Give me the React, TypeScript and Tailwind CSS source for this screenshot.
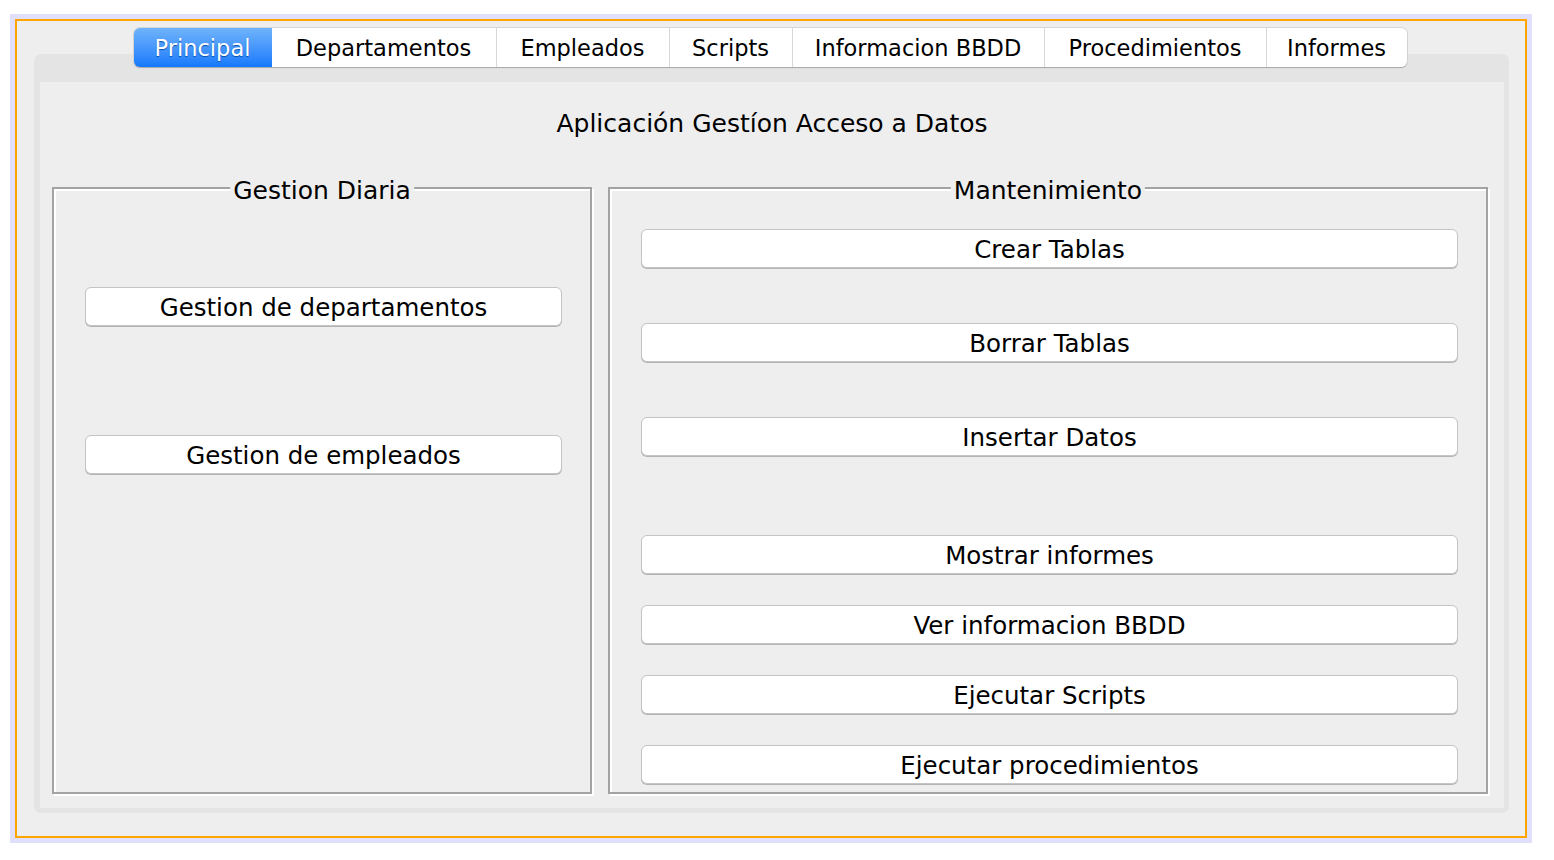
const tabs = [
  { label: "Principal", w: "w-[138px]", active: true },
  { label: "Departamentos", w: "w-[225px]" },
  { label: "Empleados", w: "w-[173px]" },
  { label: "Scripts", w: "w-[123px]" },
  { label: "Informacion BBDD", w: "w-[252px]" },
  { label: "Procedimientos", w: "w-[222px]" },
  { label: "Informes", w: "w-[140px]" },
];

function Boton({ label, className = "" }: { label: string; className?: string }) {
  return (
    <button
      className={
        "h-[39px] w-full rounded-[6px] border border-[#c4c4c4] bg-white pt-[3px] text-[24.5px] leading-[30px] text-black shadow-[0_1px_0_#b4b4b4] " +
        className
      }
    >
      {label}
    </button>
  );
}

function Grupo({
  title,
  className = "",
  children,
}: {
  title: string;
  className?: string;
  children: React.ReactNode;
}) {
  return (
    <div
      className={
        "relative border-2 border-[#a3a3a3] shadow-[inset_2px_2px_0_#ffffff,2px_2px_0_#ffffff] " +
        className
      }
    >
      <span className="absolute left-1/2 top-[-13px] -translate-x-1/2 bg-[#eeeeee] px-[3px] text-[25px] leading-[30px] text-black whitespace-nowrap">
        {title}
      </span>
      {children}
    </div>
  );
}

export default function App() {
  return (
    <div
      className="h-[860px] w-[1554px] bg-white pl-[10px] pt-[14px]"
      style={{ fontFamily: '"DejaVu Sans", "Liberation Sans", sans-serif' }}
    >
      <div className="h-[829px] w-[1522px] bg-[#e0e0fc] p-[5px]">
        <div className="h-full w-full border-2 border-[#ffa500] bg-[#eeeeee] pl-[17px] pr-[16px] pt-[7px]">
          {/* tabs */}
          <div className="relative z-10 flex h-[39px] justify-center pr-[3px]">
            <div className="flex rounded-[6px] shadow-[0_1px_1px_#a8a8a8,0_0_0_1px_#d6d6d6]">
              {tabs.map((t, i) => (
                <div
                  key={t.label}
                  className={
                    t.active
                      ? `${t.w} flex items-center justify-center rounded-l-[6px] bg-gradient-to-b from-[#6fb3fb] to-[#1379fb] pt-[3px] text-[22.5px] text-white [text-shadow:0_1px_1px_#0b4ea8]`
                      : `${t.w} flex items-center justify-center bg-white pt-[3px] text-[22.5px] text-black ${
                          i < tabs.length - 1 ? "border-r border-[#d8d8d8]" : "rounded-r-[6px]"
                        }`
                  }
                >
                  {t.label}
                </div>
              ))}
            </div>
          </div>

          {/* panel */}
          <div className="mt-[-13px] h-[759px] rounded-[7px] bg-[#e4e4e4] pb-[5px] pl-[6px] pr-[5px] pt-[28px]">
            <div className="flex h-full flex-col bg-[#eeeeee] px-[12px] pb-[14px]">
              <div className="flex h-[105px] items-start justify-center pt-[23px] text-[25px] text-black">
                Aplicación Gestíon Acceso a Datos
              </div>
              <div className="flex flex-1 gap-[16px]">
                <Grupo title="Gestion Diaria" className="w-[540px] pl-[31px] pr-[28px] pt-[98px]">
                  <Boton label="Gestion de departamentos" />
                  <Boton label="Gestion de empleados" className="mt-[109px]" />
                </Grupo>
                <Grupo title="Mantenimiento" className="w-[880px] pl-[31px] pr-[28px] pt-[40px]">
                  <Boton label="Crear Tablas" />
                  <Boton label="Borrar Tablas" className="mt-[55px]" />
                  <Boton label="Insertar Datos" className="mt-[55px]" />
                  <Boton label="Mostrar informes" className="mt-[79px]" />
                  <Boton label="Ver informacion BBDD" className="mt-[31px]" />
                  <Boton label="Ejecutar Scripts" className="mt-[31px]" />
                  <Boton label="Ejecutar procedimientos" className="mt-[31px]" />
                </Grupo>
              </div>
            </div>
          </div>
        </div>
      </div>
    </div>
  );
}
